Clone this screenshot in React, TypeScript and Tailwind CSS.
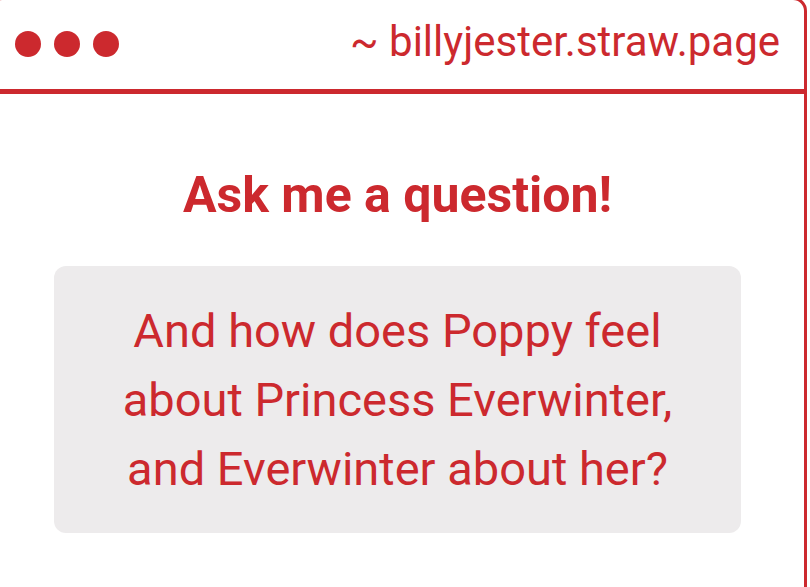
const RED = 'text-[#cc292e]'

function Dots() {
  return (
    <div className="flex items-center gap-[13px] mb-[2px]">
      <span className="w-[26px] h-[26px] rounded-full bg-[#cc292e]" />
      <span className="w-[26px] h-[26px] rounded-full bg-[#cc292e]" />
      <span className="w-[26px] h-[26px] rounded-full bg-[#cc292e]" />
    </div>
  )
}

export default function App() {
  return (
    <div className="w-[810px] h-[587px] overflow-hidden bg-white font-['Roboto',sans-serif]">
      {/* browser-style window frame */}
      <div className="ml-[-12px] mt-[-3px] w-[819px] h-[620px] border-[3px] border-[#cc292e] rounded-[14px] bg-white">
        <header className="h-[94px] flex items-center justify-between pl-[24px] pr-[24px] border-b-[5px] border-[#cc292e]">
          <Dots />
          <span className={`text-[42px] leading-none mb-[6px] ${RED}`}>~ billyjester.straw.page</span>
        </header>

        <main className="flex flex-col items-center pt-[76px] pl-[63px] pr-[63px]">
          <h1 className={`text-[50px] font-bold leading-none ${RED}`}>Ask me a question!</h1>
          <div className="mt-[46px] w-full h-[267px] rounded-[12px] bg-[#edebec] flex items-center justify-center px-[30px]">
            <p className={`text-center text-[47px] leading-[69px] ${RED}`}>
              And how does Poppy feel
              <br />
              about Princess Everwinter,
              <br />
              and Everwinter about her?
            </p>
          </div>
        </main>
      </div>
    </div>
  )
}
